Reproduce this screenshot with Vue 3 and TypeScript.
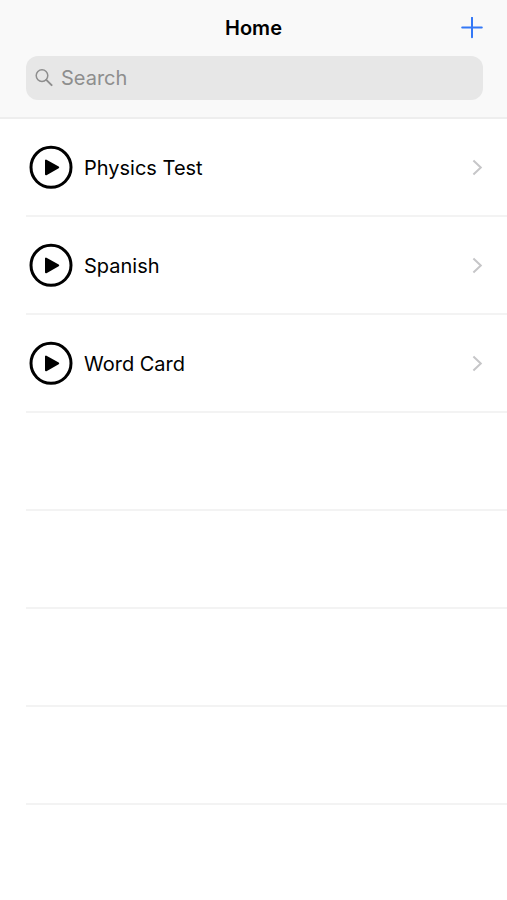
<script setup lang="ts">
import { ref, computed } from 'vue'

interface Deck {
  id: number
  title: string
}

const decks = ref<Deck[]>([
  { id: 1, title: 'Physics Test' },
  { id: 2, title: 'Spanish' },
  { id: 3, title: 'Word Card' },
])
const query = ref('')
const minimumRows = 7

const visibleDecks = computed(() =>
  decks.value.filter((d) => d.title.toLowerCase().includes(query.value.trim().toLowerCase())),
)
const emptyRows = computed(() => Math.max(0, minimumRows - visibleDecks.value.length))
</script>

<template>
  <div class="screen">
    <header class="header">
      <div class="navbar">
        <h1 class="title">Home</h1>
        <button class="add" type="button" aria-label="Add">
          <svg width="22" height="22" viewBox="0 0 22 22" fill="none" stroke="currentColor" stroke-width="2" stroke-linecap="round" aria-hidden="true">
            <path d="M11 .7v19.6M1.2 10.5h19.6" />
          </svg>
        </button>
      </div>
      <label class="search">
        <svg width="18" height="18" viewBox="0 0 18 18" fill="none" stroke="currentColor" stroke-width="1.5" aria-hidden="true">
          <circle cx="7" cy="6.6" r="5.8" />
          <path d="M11.3 10.9l5.3 5.2" stroke-width="2" stroke-linecap="round" />
        </svg>
        <input v-model="query" class="field" type="text" placeholder="Search" aria-label="Search" />
      </label>
    </header>

    <main>
      <ul class="list">
        <li v-for="deck in visibleDecks" :key="deck.id" class="row">
          <button class="play" type="button" :aria-label="`Play ${deck.title}`">
            <svg width="44" height="44" viewBox="0 0 44 44" aria-hidden="true">
              <circle cx="22" cy="22.3" r="20" fill="none" stroke="#000" stroke-width="3" />
              <path d="M17 15.5v13.8L29.2 22.4z" fill="#000" stroke="#000" stroke-width="2" stroke-linejoin="round" />
            </svg>
          </button>
          <a class="link" href="#">
            <span class="name">{{ deck.title }}</span>
            <svg width="12" height="18" viewBox="0 0 12 18" fill="none" stroke="#c6c6c8" stroke-width="2" aria-hidden="true">
              <path d="M2.4 2.6L9.8 9.6L2.4 16.6" />
            </svg>
          </a>
        </li>
        <li v-for="n in emptyRows" :key="`empty-${n}`" class="row" aria-hidden="true"></li>
      </ul>
    </main>
  </div>
</template>

<style>
body {
  background: #fff;
}
</style>

<style scoped>
.screen {
  min-height: 100vh;
  background: #fff;
  color: #000;
  font-family: Inter, Roboto, "Liberation Sans", sans-serif;
  font-size: 20px;
  line-height: 28px;
}

.header {
  padding-bottom: 17px;
  background: #f9f9f9;
  border-bottom: 2px solid #eeeeee;
}

.navbar {
  display: grid;
  grid-template-columns: 1fr auto 1fr;
  align-items: center;
  height: 56px;
  padding: 0 24px;
}

.title {
  grid-column: 2;
  margin: 0;
  font-size: 20px;
  font-weight: 600;
}

.add {
  display: flex;
  justify-self: end;
  padding: 0;
  border: 0;
  background: none;
  color: #3478f6;
}

.search {
  display: flex;
  align-items: center;
  gap: 8px;
  height: 44px;
  margin: 0 24px 0 26px;
  padding: 0 9px;
  box-sizing: border-box;
  border-radius: 12px;
  background: #e7e7e7;
  color: #8e8e8e;
}

.field {
  flex: 1;
  min-width: 0;
  padding: 0;
  border: 0;
  outline: 0;
  background: none;
  color: #000;
  font: inherit;
}

.field::placeholder {
  color: #8e8e8e;
  opacity: 1;
}

.list {
  margin: 0;
  padding: 0 0 0 26px;
  list-style: none;
}

.row {
  display: flex;
  align-items: center;
  height: 98px;
  box-sizing: border-box;
  border-bottom: 2px solid #f3f3f3;
}

.play {
  display: flex;
  margin-left: 3px;
  padding: 0;
  border: 0;
  background: none;
}

.link {
  display: flex;
  flex: 1;
  align-items: center;
  justify-content: space-between;
  align-self: stretch;
  padding: 0 24px 0 11px;
  color: inherit;
  text-decoration: none;
}

.name {
  padding-top: 2px;
}
</style>
